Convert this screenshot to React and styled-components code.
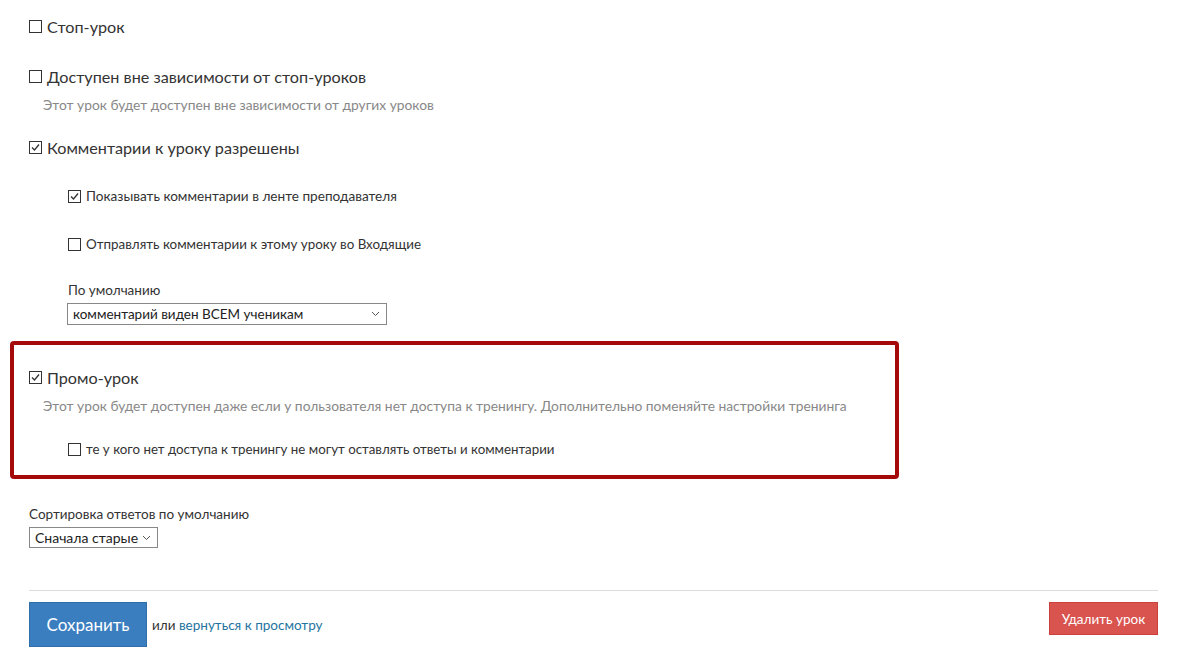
import React from "react";
import styled, { createGlobalStyle } from "styled-components";

const GlobalStyle = createGlobalStyle`
  html, body {
    margin: 0;
    padding: 0;
    background: #fff;
  }
  body {
    font-family: Lato, "Open Sans", "Liberation Sans", sans-serif;
    color: #333;
  }
`;

const Page = styled.div`
  width: 1200px;
  height: 664px;
  overflow: hidden;
  padding: 14px 42px 0 29px;
  box-sizing: border-box;
`;

const Row = styled.label`
  display: flex;
  align-items: center;
  gap: 5px;
  font-size: ${(p) => (p.small ? p.fs || "13.6px" : "16.2px")};
  color: #333;
  margin-left: ${(p) => (p.indent ? "39px" : "0")};
  height: ${(p) => (p.small ? "18px" : "24px")};
`;

const Box = styled.span`
  width: 11px;
  height: 11px;
  border: 1px solid #333;
  background: #fff;
  display: inline-flex;
  align-items: center;
  justify-content: center;
  flex-shrink: 0;
`;

const Hint = styled.div`
  font-size: 13.8px;
  color: #888;
  margin: 8px 0 0 14px;
`;

const Block = styled.div`
  margin-top: ${(p) => p.mt || "0"};
`;

const FieldLabel = styled.div`
  font-size: 13.5px;
  color: #333;
  margin-left: ${(p) => (p.indent ? "39px" : "0")};
`;

const Select = styled.div`
  margin-top: 5px;
  margin-left: ${(p) => (p.indent ? "38px" : "0")};
  width: ${(p) => p.w};
  height: ${(p) => p.h || "22px"};
  border: 1px solid #888;
  box-sizing: border-box;
  display: flex;
  align-items: center;
  justify-content: space-between;
  padding: 0 6px 0 5px;
  font-size: ${(p) => p.fs || "13.5px"};
  color: #222;
`;

const Promo = styled.div`
  margin: 16px 0 0 -19px;
  width: 889px;
  height: 138px;
  box-sizing: border-box;
  border: 4px solid #a50a0a;
  border-radius: 4px;
  padding: 20px 15px 0 15px;
`;

const Divider = styled.hr`
  border: none;
  border-top: 1px solid #ddd;
  margin: 42px 0 0 0;
  width: 1129px;
`;

const Footer = styled.div`
  display: flex;
  align-items: flex-start;
  justify-content: space-between;
  width: 1129px;
  margin-top: 11px;
`;

const Left = styled.div`
  display: flex;
  align-items: center;
  gap: 5px;
  font-size: 13.5px;
  color: #333;
`;

const SaveBtn = styled.button`
  width: 118px;
  height: 45px;
  background: #3a7ebf;
  border: 1px solid #2f6ea8;
  color: #fff;
  font-family: inherit;
  font-size: 17px;
  padding: 0;
`;

const Link = styled.a`
  color: #23749e;
  text-decoration: none;
`;

const DeleteBtn = styled.button`
  width: 109px;
  height: 33px;
  background: #d9534f;
  border: 1px solid #c9403c;
  color: #fff;
  font-family: inherit;
  font-size: 13.5px;
  padding: 0;
`;

function Check({ checked }) {
  return (
    <Box>
      {checked && (
        <svg width="9" height="9" viewBox="0 0 9 9">
          <path d="M1 4.5 L3.5 7 L8 1.5" fill="none" stroke="#333" strokeWidth="1.3" />
        </svg>
      )}
    </Box>
  );
}

function Chevron() {
  return (
    <svg width="9" height="6" viewBox="0 0 9 6">
      <path d="M1 1 L4.5 4.5 L8 1" fill="none" stroke="#555" strokeWidth="1" />
    </svg>
  );
}

export default function App() {
  return (
    <>
      <GlobalStyle />
      <Page>
        <Row>
          <Check /> Стоп-урок
        </Row>
        <Block mt="26px">
          <Row>
            <Check /> Доступен вне зависимости от стоп-уроков
          </Row>
          <Hint>Этот урок будет доступен вне зависимости от других уроков</Hint>
        </Block>
        <Block mt="22px">
          <Row>
            <Check checked /> Комментарии к уроку разрешены
          </Row>
        </Block>
        <Block mt="28px">
          <Row small indent>
            <Check checked /> Показывать комментарии в ленте преподавателя
          </Row>
        </Block>
        <Block mt="30px">
          <Row small indent fs="13.4px">
            <Check /> Отправлять комментарии к этому уроку во Входящие
          </Row>
        </Block>
        <Block mt="29px">
          <FieldLabel indent>По умолчанию</FieldLabel>
          <Select indent w="320px">
            комментарий виден ВСЕМ ученикам <Chevron />
          </Select>
        </Block>
        <Promo>
          <Row>
            <Check checked /> Промо-урок
          </Row>
          <Hint>
            Этот урок будет доступен даже если у пользователя нет доступа к тренингу. Дополнительно поменяйте настройки тренинга
          </Hint>
          <Block mt="26px">
            <Row small indent fs="13.3px">
              <Check /> те у кого нет доступа к тренингу не могут оставлять ответы и комментарии
            </Row>
          </Block>
        </Promo>
        <Block mt="27px">
          <FieldLabel>Сортировка ответов по умолчанию</FieldLabel>
          <Select w="129px" h="21px" fs="14px">
            Сначала старые <Chevron />
          </Select>
        </Block>
        <Divider />
        <Footer>
          <Left>
            <SaveBtn>Сохранить</SaveBtn>
            <span>
              или <Link href="#">вернуться к просмотру</Link>
            </span>
          </Left>
          <DeleteBtn>Удалить урок</DeleteBtn>
        </Footer>
      </Page>
    </>
  );
}
